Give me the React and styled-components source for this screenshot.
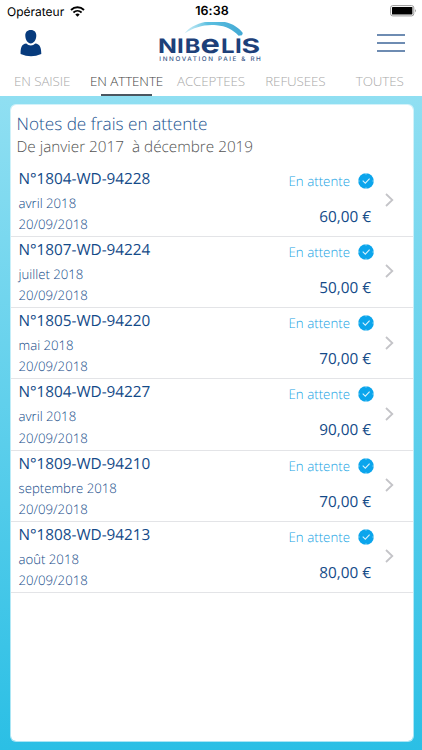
import React, { useState } from 'react';
import styled, { createGlobalStyle } from 'styled-components';

const GlobalStyle = createGlobalStyle`
  * {
    box-sizing: border-box;
  }

  body {
    margin: 0;
    font-family: 'Open Sans', 'Noto Sans', sans-serif;
    font-weight: 300;
    text-rendering: geometricPrecision;
  }
`;

const Screen = styled.div`
  width: 100%;
  height: 100vh;
  display: flex;
  flex-direction: column;
  overflow: hidden;
  background: #fff;
`;

const StatusBar = styled.div`
  height: 22px;
  flex: none;
  display: grid;
  grid-template-columns: 1fr auto 1fr;
  align-items: center;
  padding: 0 5px 0 7px;
  color: #000;
  font-family: Inter, sans-serif;
  font-size: 12px;
  font-weight: 400;
`;

const Carrier = styled.div`
  display: flex;
  align-items: center;
  gap: 6px;
`;

const Clock = styled.div`
  font-weight: 600;
  font-size: 12.5px;
  letter-spacing: 0.1px;
`;

const Battery = styled.svg`
  justify-self: end;
`;

const Header = styled.header`
  height: 43px;
  flex: none;
  display: grid;
  grid-template-columns: 1fr auto 1fr;
  padding: 0 17px;
`;

const IconButton = styled.button`
  border: 0;
  padding: 0;
  background: none;
  display: flex;
  justify-self: ${({ $end }) => ($end ? 'end' : 'start')};
  margin-top: ${({ $end }) => ($end ? '12px' : '8px')};
  margin-left: 3px;
  height: 27px;
`;

const Tabs = styled.nav`
  height: 31px;
  flex: none;
  display: grid;
  grid-template-columns: repeat(5, 1fr);
`;

const Tab = styled.button`
  border: 0;
  padding: 6px 0 0;
  background: none;
  display: flex;
  flex-direction: column;
  align-items: center;
  justify-content: space-between;
  font: inherit;
  font-size: 13.4px;
  letter-spacing: -0.1px;
  line-height: 20px;
  white-space: nowrap;
  color: ${({ $active }) => ($active ? '#444' : '#a9a9a9')};

  &::after {
    content: '';
    width: 51px;
    height: 2px;
    background: ${({ $active }) => ($active ? '#4b5660' : 'transparent')};
  }
`;

const Main = styled.main`
  flex: 1;
  min-height: 0;
  padding: 8px 8px 8px 10px;
  background: linear-gradient(#90dff2, #2bbfe5);
`;

const Card = styled.section`
  height: 100%;
  border: 1px solid rgba(255, 255, 255, 0.6);
  border-radius: 6px;
  background: #fff;
  background-clip: padding-box;
`;

const CardHeader = styled.div`
  height: 60.5px;
  padding: 8px 5.5px 0;
`;

const Title = styled.h1`
  margin: 0;
  font-size: 17.2px;
  font-weight: 300;
  line-height: 24px;
  color: #1c5490;
`;

const Period = styled.p`
  margin: 0;
  font-size: 15.3px;
  line-height: 21px;
  white-space: pre;
  color: #555;
`;

const List = styled.ul`
  list-style: none;
  margin: 0;
  padding: 0;
`;

const Row = styled.li`
  height: 71.25px;
  display: flex;
  padding: 2px 19px 0 7.5px;
  border-bottom: 1px solid #e3e4e7;
  color: #134a88;
`;

const Details = styled.div`
  flex: 1;
`;

const Reference = styled.div`
  font-size: 15.3px;
  font-weight: 400;
  line-height: 22px;
`;

const Detail = styled.div`
  font-size: 13.2px;
  line-height: 21.4px;

  ${Reference} + & {
    margin-top: 3px;
  }
`;

const Summary = styled.div`
  display: flex;
  flex-direction: column;
  align-items: flex-end;
`;

const Status = styled.div`
  display: flex;
  align-items: center;
  gap: 8px;
  margin-right: -3px;
  height: 26px;
  font-size: 13.3px;
  color: #18a4e4;
`;

const Amount = styled.div`
  margin-top: 12px;
  font-size: 15.3px;
  font-weight: 400;
  line-height: 22px;
`;

const Chevron = styled.svg`
  margin: 24.5px 0 0 14px;
`;

const WifiIcon = () => (
  <svg width="15" height="11" viewBox="0 0 15 11" fill="none" stroke="#000">
    <path d="M1 4C4.7.4 10.3.4 14 4" strokeWidth="1.9" />
    <path d="M3.4 6.5C5.8 4.3 9.2 4.3 11.6 6.5" strokeWidth="1.8" />
    <path d="M7.5 10.8 5.3 8.5Q7.5 6.6 9.7 8.5Z" fill="#000" stroke="none" />
  </svg>
);

const BatteryIcon = () => (
  <Battery width="27" height="12" viewBox="0 0 27 12">
    <rect x=".6" y=".6" width="23.2" height="10.3" rx="2.2" fill="#fff" stroke="#999" strokeWidth="1" />
    <rect x="2" y="2" width="20.4" height="7.5" rx=".6" />
    <path d="M25 4q1.8 1.7 0 3.5z" fill="#888" />
  </Battery>
);

const UserIcon = () => (
  <svg width="22" height="27" viewBox="0 0 22 27" fill="#073b7d">
    <path d="M10.800 0C14.500 0 16.400 2.300 16.300 5.800C16.200 10 13.800 13.500 10.800 13.500S5.400 10 5.300 5.800C5.200 2.300 7.100 0 10.800 0Z" />
    <path d="M6.300 13.600C7.600 14.900 9.100 15.500 10.800 15.500S14 14.900 15.300 13.600C19.800 14 21.400 17.600 21.300 24Q16 26.200 11 26.200T.6 24C.4 17.600 1.800 14 6.300 13.600Z" />
  </svg>
);

const MenuIcon = () => (
  <svg width="28" height="19" viewBox="0 0 28 19" stroke="#3f6799" strokeWidth="1.5">
    <path d="M0 1H28M0 9H28M0 17H28" />
  </svg>
);

const letters = [
  { x: 158, char: 'N', stretch: 1.24 },
  { x: 177, char: 'I', stretch: 1.2 },
  { x: 184.8, char: 'B', stretch: 1.18 },
  { x: 200.6, char: 'e', stretch: 1.25, size: 26 },
  { x: 221, char: 'L', stretch: 1.2 },
  { x: 235, char: 'I', stretch: 1.2 },
  { x: 241.6, char: 'S', stretch: 1.42 },
];

const Logo = () => (
  <svg width="104" height="43" viewBox="159 22 104 43">
    <defs>
      <linearGradient id="swoosh">
        <stop offset="0" stopColor="#9bdcee" stopOpacity="0.5" />
        <stop offset="0.4" stopColor="#5bbfe0" />
        <stop offset="1" stopColor="#43a9d4" />
      </linearGradient>
    </defs>
    <path
      d="M184.500 33.500C191 24.500 206 20 219.500 21.100C230 22.200 238 26.500 242.800 33L242 35.300L238.600 35.800C233 29.500 226 26 216.500 25.200C204 24.200 195 27 184.500 33.500Z"
      fill="url(#swoosh)"
    />
    <g fontFamily="Inter, sans-serif" fontWeight="700" fill="#1d4079">
      {letters.map(({ x, char, stretch, size = 20 }) => (
        <text key={x} transform={`translate(${x} 52.700) scale(${stretch} 1)`} fontSize={size}>
          {char}
        </text>
      ))}
    </g>
    <text
      x="159.300"
      y="61.300"
      textLength="101.500"
      fontFamily="Inter, sans-serif"
      fontSize="6.300"
      fontWeight="500"
      fill="#3c5a8a"
    >
      INNOVATION PAIE &amp; RH
    </text>
  </svg>
);

const CheckBadge = () => (
  <svg width="16" height="16" viewBox="0 0 16 16" fill="none">
    <circle cx="8" cy="8" r="7.8" fill="#0ba5ec" />
    <path d="M8 0V1.500M8 14.500V16M0 8H1.500M14.500 8H16" stroke="#d8f2fd" strokeWidth=".8" />
    <path d="M4.700 7.700 7.300 10.200 11.600 5.700" stroke="#d8f2fd" strokeWidth="1.100" />
  </svg>
);

const tabs = ['EN SAISIE', 'EN ATTENTE', 'ACCEPTEES', 'REFUSEES', 'TOUTES'];

const expenses = [
  { id: 'N°1804-WD-94228', month: 'avril 2018', date: '20/09/2018', amount: '60,00 €' },
  { id: 'N°1807-WD-94224', month: 'juillet 2018', date: '20/09/2018', amount: '50,00 €' },
  { id: 'N°1805-WD-94220', month: 'mai 2018', date: '20/09/2018', amount: '70,00 €' },
  { id: 'N°1804-WD-94227', month: 'avril 2018', date: '20/09/2018', amount: '90,00 €' },
  { id: 'N°1809-WD-94210', month: 'septembre 2018', date: '20/09/2018', amount: '70,00 €' },
  { id: 'N°1808-WD-94213', month: 'août 2018', date: '20/09/2018', amount: '80,00 €' },
];

const ExpenseRow = ({ expense }) => (
  <Row>
    <Details>
      <Reference>{expense.id}</Reference>
      <Detail>{expense.month}</Detail>
      <Detail>{expense.date}</Detail>
    </Details>
    <Summary>
      <Status>
        En attente
        <CheckBadge />
      </Status>
      <Amount>{expense.amount}</Amount>
    </Summary>
    <Chevron width="9" height="16" viewBox="0 0 9 16" fill="none" stroke="#c4c4c8" strokeWidth="1.8">
      <path d="M1 2 7.300 8 1 14" />
    </Chevron>
  </Row>
);

export default function App() {
  const [activeTab, setActiveTab] = useState('EN ATTENTE');

  return (
    <Screen>
      <GlobalStyle />
      <StatusBar>
        <Carrier>
          Opérateur
          <WifiIcon />
        </Carrier>
        <Clock>16:38</Clock>
        <BatteryIcon />
      </StatusBar>
      <Header>
        <IconButton aria-label="Profil">
          <UserIcon />
        </IconButton>
        <Logo />
        <IconButton $end aria-label="Menu">
          <MenuIcon />
        </IconButton>
      </Header>
      <Tabs>
        {tabs.map((tab) => (
          <Tab key={tab} $active={tab === activeTab} onClick={() => setActiveTab(tab)}>
            {tab}
          </Tab>
        ))}
      </Tabs>
      <Main>
        <Card>
          <CardHeader>
            <Title>Notes de frais en attente</Title>
            <Period>{'De janvier 2017  à décembre 2019'}</Period>
          </CardHeader>
          <List>
            {expenses.map((expense) => (
              <ExpenseRow key={expense.id} expense={expense} />
            ))}
          </List>
        </Card>
      </Main>
    </Screen>
  );
}
